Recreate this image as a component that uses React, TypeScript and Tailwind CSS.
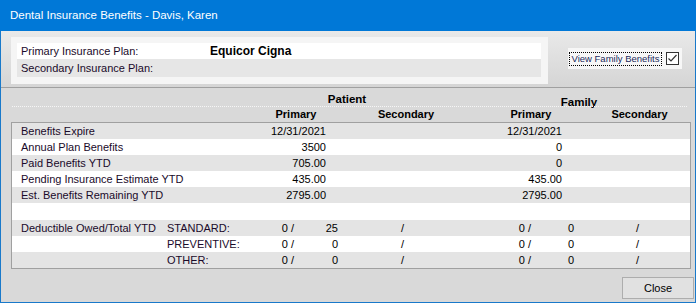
import React from "react";

const valueRows = [
  { label: "Benefits Expire", p: "12/31/2021", f: "12/31/2021" },
  { label: "Annual Plan Benefits", p: "3500", f: "0" },
  { label: "Paid Benefits YTD", p: "705.00", f: "0" },
  { label: "Pending Insurance Estimate YTD", p: "435.00", f: "435.00" },
  { label: "Est. Benefits Remaining YTD", p: "2795.00", f: "2795.00" },
];

const dedRows = [
  { label: "Deductible Owed/Total YTD", type: "STANDARD:", total: "25" },
  { label: "", type: "PREVENTIVE:", total: "0" },
  { label: "", type: "OTHER:", total: "0" },
];

export default function App() {
  return (
    <div className="w-[696px] h-[303px] bg-[#1979ca] flex flex-col font-['Liberation_Sans',Arial,sans-serif] text-black overflow-hidden">
      {/* Title bar */}
      <div className="h-[31px] shrink-0 bg-[#0078d7] flex items-center pl-[10px] text-white text-[11.5px]">
        Dental Insurance Benefits - Davis, Karen
      </div>

      {/* Body */}
      <div className="mx-[1px] mb-[1px] flex-1 flex flex-col bg-[#d9d9d9]">
        {/* Top panel */}
        <div className="h-[57px] shrink-0 flex items-start bg-gradient-to-b from-[#e9e9e9] to-[#d5d5d5] border-b border-[#a0a0a0]">
          <div className="ml-[10px] mt-[6px] w-[537px] h-[47px] bg-[#f5f5f5] pl-[6px] pr-[7px] pt-[6px] flex flex-col">
            <div className="h-[16px] bg-white flex items-center text-[11px]">
              <span className="w-[193px] pl-[4px] text-[#1a0a2a]">Primary Insurance Plan:</span>
              <span className="font-bold text-[12px]">Equicor Cigna</span>
            </div>
            <div className="h-[18px] bg-[#e6e6e6] flex items-center text-[11px]">
              <span className="pl-[4px] text-[#1a0a2a]">Secondary Insurance Plan:</span>
            </div>
          </div>
          <div className="ml-[20px] mt-[17px] w-[114px] h-[21px] bg-[#f7f7f7] flex items-start">
            <div className="ml-[1px] mt-[4px] w-[93px] h-[14px] border border-dotted border-black flex items-center justify-center text-[9.5px] leading-[12px] text-[#1c2a5c]">
              View Family Benefits
            </div>
            <div className="ml-[4px] mt-[4px] w-[13px] h-[13px] border border-[#333333] bg-white flex items-center justify-center">
              <svg width="11" height="11" viewBox="0 0 11 11">
                <path d="M1.5 5.5 L4 8 L9.5 2" fill="none" stroke="#333333" strokeWidth="1.2" />
              </svg>
            </div>
          </div>
        </div>

        {/* Group headers */}
        <div className="h-[18px] shrink-0 flex items-start font-bold text-[11.5px] leading-[14px]">
          <div className="w-[296px]" />
          <div className="w-[100px] text-center pt-[4px]">Patient</div>
          <div className="w-[132px]" />
          <div className="w-[100px] text-center pt-[7px]">Family</div>
        </div>
        <div className="ml-[11px] mr-[8px] h-0 border-t border-dotted border-[#f6f6f6] shrink-0" />
        <div className="h-[15px] shrink-0 flex items-start font-bold text-[11px] leading-[13px] pt-[1px]">
          <div className="w-[245px]" />
          <div className="w-[100px] text-center">Primary</div>
          <div className="w-[120px] text-center">Secondary</div>
          <div className="w-[130px] text-center">Primary</div>
          <div className="w-[87px] text-center">Secondary</div>
        </div>

        {/* Table */}
        <div className="ml-[10px] w-[680px] border border-[#a0a0a0] bg-white text-[11px] shrink-0">
          {valueRows.map((r, i) => (
            <div key={r.label} className={`h-[16px] flex items-center ${i % 2 === 0 ? "bg-[#e4e4e4]" : "bg-white"}`}>
              <div className="w-[233px] pl-[9px] text-[#1a0a2a]">{r.label}</div>
              <div className="w-[81px] text-right">{r.p}</div>
              <div className="w-[154px]" />
              <div className="w-[82px] text-right">{r.f}</div>
            </div>
          ))}
          <div className="h-[17px] bg-white" />
          {dedRows.map((r, i) => (
            <div key={r.type} className={`h-[16px] flex items-center ${i % 2 === 0 ? "bg-[#e4e4e4]" : "bg-white"}`}>
              <div className="w-[150px] pl-[9px] text-[#1a0a2a] whitespace-nowrap">{r.label}</div>
              <div className="w-[108px] pl-[5px] text-[#1a0a2a]">{r.type}</div>
              <div className="w-[24px] text-right">0 /</div>
              <div className="w-[44px] text-right">{r.total}</div>
              <div className="w-[66px] text-right">/</div>
              <div className="w-[127px] text-right">0 /</div>
              <div className="w-[43px] text-right">0</div>
              <div className="w-[65px] text-right">/</div>
            </div>
          ))}
        </div>

        {/* Footer */}
        <div className="flex justify-end pr-[1px] pt-[8px]">
          <button className="w-[72px] h-[22px] border border-[#adadad] bg-[#e1e1e1] text-[11px] flex items-center justify-center">
            Close
          </button>
        </div>
      </div>
    </div>
  );
}
